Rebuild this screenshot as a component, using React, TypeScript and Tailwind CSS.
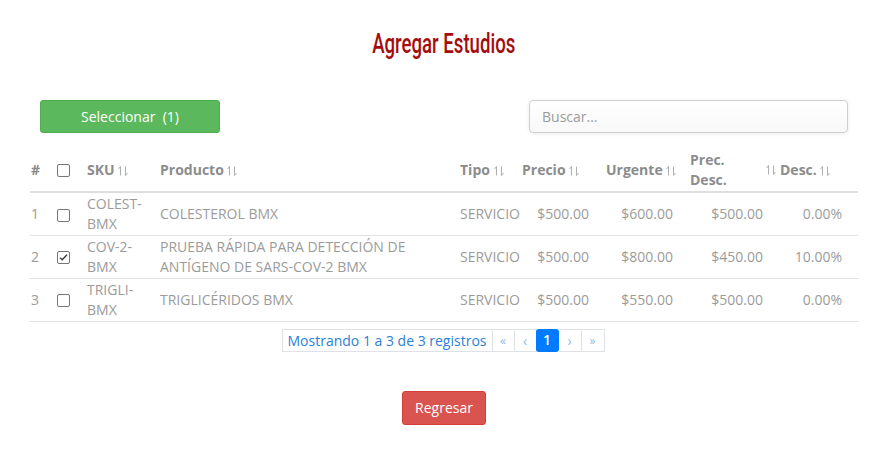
import React from "react";

type Row = {
  n: number;
  checked: boolean;
  sku: string[];
  producto: string;
  tipo: string;
  precio: string;
  urgente: string;
  precDesc: string;
  desc: string;
};

const rows: Row[] = [
  { n: 1, checked: false, sku: ["COLEST-", "BMX"], producto: "COLESTEROL BMX", tipo: "SERVICIO", precio: "$500.00", urgente: "$600.00", precDesc: "$500.00", desc: "0.00%" },
  { n: 2, checked: true, sku: ["COV-2-", "BMX"], producto: "PRUEBA RÁPIDA PARA DETECCIÓN DE ANTÍGENO DE SARS-COV-2 BMX", tipo: "SERVICIO", precio: "$500.00", urgente: "$800.00", precDesc: "$450.00", desc: "10.00%" },
  { n: 3, checked: false, sku: ["TRIGLI-", "BMX"], producto: "TRIGLICÉRIDOS BMX", tipo: "SERVICIO", precio: "$500.00", urgente: "$550.00", precDesc: "$500.00", desc: "0.00%" },
];

function SortIcon() {
  return (
    <svg width="10" height="10" viewBox="0 0 10 10" className="inline-block align-[-1px]" fill="none" stroke="#b0b0b0" strokeWidth="1">
      <path d="M2.5 0.5v9M2.5 0.5L0.5 3" />
      <path d="M7.5 9.5v-9M7.5 9.5L9.5 7" />
    </svg>
  );
}

function Check({ checked }: { checked: boolean }) {
  return (
    <span className="inline-flex w-[13px] h-[13px] border border-[#767676] rounded-[2px] bg-white items-center justify-center align-middle">
      {checked && (
        <svg width="9" height="9" viewBox="0 0 9 9" fill="none" stroke="#333" strokeWidth="1.3">
          <path d="M1 4.6l2.2 2.2L8 1.8" />
        </svg>
      )}
    </span>
  );
}

export default function App() {
  return (
    <div className="min-h-screen bg-white font-['Open_Sans',sans-serif] text-[14px]">
      <div className="pl-[30px] pr-[26px] pt-[28px]">
        <h1 className="text-center h-[32px] leading-[32px]">
          <span className="inline-block scale-x-[0.69] text-[27px] text-[#a50d0d] font-['Roboto',sans-serif] font-medium">
            Agregar Estudios
          </span>
        </h1>

        <div className="flex items-center justify-between px-[10px] mt-[40px]">
          <button className="w-[180px] h-[33px] rounded-[3px] bg-[#5cb85c] border border-[#4cae4c] text-white text-[14px]">
            Seleccionar&nbsp; (1)
          </button>
          <div className="w-[319px] h-[33px] rounded-[4px] border border-[#cfcfcf] bg-gradient-to-b from-white to-[#f8f8f8] shadow-[0_1px_4px_rgba(0,0,0,0.08)] flex items-center px-[12px] text-[#9a9a9a] text-[14px]">
            Buscar...
          </div>
        </div>

        <table className="w-[828px] mt-[15px] border-collapse table-fixed text-[#9b9b9b]">
          <colgroup>
            <col className="w-[25px]" />
            <col className="w-[30px]" />
            <col className="w-[73px]" />
            <col className="w-[300px]" />
            <col className="w-[62px]" />
            <col className="w-[72px]" />
            <col className="w-[84px]" />
            <col className="w-[103px]" />
            <col className="w-[79px]" />
          </colgroup>
          <thead>
            <tr className="border-b-2 border-[#dedede] text-[#8c8c8c] font-bold text-left leading-[20px]">
              <th className="pl-[1px] h-[44px]">#</th>
              <th className="pl-[2px]"><Check checked={false} /></th>
              <th className="pl-[2px] whitespace-nowrap">SKU <SortIcon /></th>
              <th className="pl-[2px] whitespace-nowrap">Producto <SortIcon /></th>
              <th className="pl-[2px] whitespace-nowrap">Tipo <SortIcon /></th>
              <th className="pl-[2px] whitespace-nowrap">Precio <SortIcon /></th>
              <th className="pl-[14px] whitespace-nowrap">Urgente <SortIcon /></th>
              <th className="pl-[14px] pr-[3px]">
                <div className="flex items-center justify-between">
                  <span>Prec.<br />Desc.</span>
                  <SortIcon />
                </div>
              </th>
              <th className="pl-[1px] whitespace-nowrap">Desc. <SortIcon /></th>
            </tr>
          </thead>
          <tbody>
            {rows.map((r) => (
              <tr key={r.n} className="border-b border-[#e2e2e2] leading-[20px]">
                <td className="pl-[1px] h-[43px] py-[1px]">{r.n}</td>
                <td className="pl-[2px]"><Check checked={r.checked} /></td>
                <td className="pl-[2px]">{r.sku[0]}<br />{r.sku[1]}</td>
                <td className="pl-[2px] pr-[2px]">{r.producto}</td>
                <td className="pl-[2px] whitespace-nowrap">{r.tipo}</td>
                <td className="pr-[3px] text-right">{r.precio}</td>
                <td className="pr-[3px] text-right">{r.urgente}</td>
                <td className="pr-[16px] text-right">{r.precDesc}</td>
                <td className="pr-[16px] text-right">{r.desc}</td>
              </tr>
            ))}
          </tbody>
        </table>

        <div className="flex justify-center mt-[7px] text-[#2b7fd6]">
          <div className="flex h-[23px] text-[14px] leading-[21px] -ml-[2px]">
            <span className="border border-[#dee2e6] px-[5px]">Mostrando 1 a 3 de 3 registros</span>
            <span className="border border-l-0 border-[#dee2e6] w-[22px] text-center text-[12px] text-[#8fb8e6]">«</span>
            <span className="border border-l-0 border-[#dee2e6] w-[22px] text-center text-[14px] text-[#8fb8e6]">‹</span>
            <span className="w-[23px] text-center bg-[#007bff] text-white font-semibold rounded-[3px] -ml-px relative">1</span>
            <span className="border border-l-0 border-[#dee2e6] w-[23px] text-center text-[14px] text-[#8fb8e6]">›</span>
            <span className="border border-l-0 border-[#dee2e6] w-[23px] text-center text-[12px] text-[#8fb8e6]">»</span>
          </div>
        </div>

        <div className="flex justify-center mt-[39px]">
          <button className="w-[84px] h-[34px] rounded-[3px] bg-[#d9534f] border border-[#d43f3a] text-white text-[14px]">
            Regresar
          </button>
        </div>
      </div>
    </div>
  );
}
